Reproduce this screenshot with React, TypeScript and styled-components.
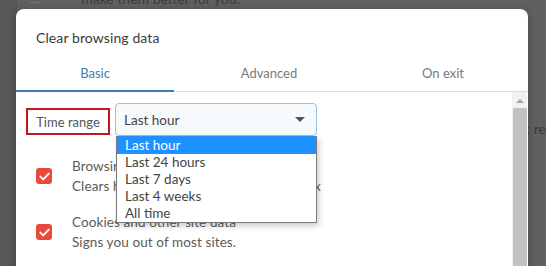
import styled, { createGlobalStyle } from "styled-components";

const GlobalStyle = createGlobalStyle`
  html, body {
    margin: 0;
    padding: 0;
    background: #5f5f5f;
    overflow: hidden;
  }
  * {
    box-sizing: border-box;
  }
`;

const Page = styled.div`
  position: relative;
  width: 546px;
  height: 266px;
  overflow: hidden;
  display: flex;
  background: #606060;
  font-family: Lato, "Noto Sans", sans-serif;
`;

const Sidebar = styled.div`
  width: 23px;
  background: #585858;
  border-right: 1px solid #555;
`;

const BackMain = styled.div`
  flex: 1;
  display: flex;
  flex-direction: column;
  padding: 0 0 0 64px;
  color: #3c3c3c;
  font-size: 14px;
`;

const BackLine = styled.div<{ $top: number; $left?: number }>`
  margin-top: ${(p) => p.$top}px;
  padding-left: ${(p) => p.$left ?? 0}px;
  line-height: 16px;
  white-space: nowrap;
`;

const MenuIcon = styled.div`
  position: absolute;
  left: 30px;
  top: 0;
  width: 9px;
  height: 3px;
  border-bottom: 1px solid #777;
`;

const Dialog = styled.div`
  position: absolute;
  top: 9px;
  left: 16px;
  width: 512px;
  height: 290px;
  background: #fff;
  border-radius: 8px;
  box-shadow: 0 2px 8px rgba(0, 0, 0, 0.25);
  display: flex;
  flex-direction: column;
`;

const Title = styled.h2`
  margin: 0;
  padding: 20px 20px 0;
  height: 46px;
  font-size: 14px;
  font-weight: 400;
  letter-spacing: 0.1px;
  color: #3a3a3a;
`;

const Tabs = styled.div`
  display: grid;
  grid-template-columns: 158px 158px 158px;
  column-gap: 16px;
  height: 37px;
  border-bottom: 1px solid #dcdcdc;
`;

const Tab = styled.div<{ $active?: boolean }>`
  display: flex;
  align-items: center;
  justify-content: center;
  font-size: 13px;
  color: ${(p) => (p.$active ? "#3d7cb8" : "#7a7a7a")};
  border-bottom: 2px solid ${(p) => (p.$active ? "#3d7cb8" : "transparent")};
  margin-bottom: -1px;
`;

const Body = styled.div`
  flex: 1;
  display: flex;
  overflow: hidden;
`;

const Content = styled.div`
  flex: 1;
  padding: 11px 0 0 10px;
  display: flex;
  flex-direction: column;
`;

const RangeRow = styled.div`
  position: relative;
  display: flex;
  align-items: center;
  gap: 5px;
`;

const RangeLabel = styled.div`
  width: 84px;
  height: 27px;
  margin-top: 4px;
  border: 2px solid #c4161c;
  display: flex;
  align-items: center;
  justify-content: center;
  font-size: 13px;
  color: #555;
`;

const Select = styled.div`
  width: 202px;
  height: 33px;
  border: 1px solid #9dbfe0;
  border-radius: 4px;
  background: #f7fafd;
  display: flex;
  align-items: center;
  justify-content: space-between;
  padding: 0 11px 0 8px;
  font-size: 13.5px;
  color: #444;
`;

const Arrow = styled.div`
  width: 0;
  height: 0;
  border-left: 5px solid transparent;
  border-right: 5px solid transparent;
  border-top: 5px solid #555;
`;

const Options = styled.ul`
  position: absolute;
  top: 33px;
  left: 90px;
  width: 201px;
  margin: 0;
  padding: 0;
  list-style: none;
  background: #fff;
  border: 1px solid #7a7a7a;
  border-top: none;
  box-shadow: 2px 3px 6px rgba(0, 0, 0, 0.2);
  z-index: 2;
`;

const Option = styled.li<{ $selected?: boolean }>`
  height: 17px;
  line-height: 17px;
  padding-left: 8px;
  font-size: 13.5px;
  color: ${(p) => (p.$selected ? "#fff" : "#444")};
  background: ${(p) => (p.$selected ? "#1e90ff" : "transparent")};
  &:first-child {
    height: 18px;
    line-height: 18px;
  }
`;

const Item = styled.div<{ $top: number }>`
  display: flex;
  align-items: center;
  gap: 20px;
  margin-top: ${(p) => p.$top}px;
  padding-left: 10px;
`;

const Check = styled.div`
  width: 16px;
  height: 16px;
  border-radius: 3px;
  background: #e84a3c;
  display: flex;
  align-items: center;
  justify-content: center;
`;

const ItemText = styled.div`
  display: flex;
  flex-direction: column;
  font-size: 13.5px;
  line-height: 20px;
  letter-spacing: 0.1px;
  color: #5a5a5a;
  white-space: nowrap;
`;

const ScrollTrack = styled.div`
  width: 15px;
  margin-right: 1px;
  background: #f1f1f1;
  display: flex;
  flex-direction: column;
  align-items: center;
`;

const ScrollUp = styled.div`
  margin-top: 7px;
  width: 0;
  height: 0;
  border-left: 4px solid transparent;
  border-right: 4px solid transparent;
  border-bottom: 4px solid #a3a3a3;
`;

const ScrollThumb = styled.div`
  margin-top: 5px;
  width: 14px;
  flex: 1;
  background: #c1c1c1;
`;

const options = ["Last hour", "Last 24 hours", "Last 7 days", "Last 4 weeks", "All time"];

function CheckMark() {
  return (
    <svg width="11" height="9" viewBox="0 0 11 9">
      <path d="M1.3 4.6 L4.2 7.4 L9.8 1.6" fill="none" stroke="#fff" strokeWidth="1.9" strokeLinecap="round" strokeLinejoin="round" />
    </svg>
  );
}

export default function App() {
  return (
    <>
      <GlobalStyle />
      <Page>
        <Sidebar />
        <MenuIcon />
        <BackMain>
          <BackLine $top={-9}>make them better for you.</BackLine>
          <BackLine $top={114} $left={439}>ic re</BackLine>
        </BackMain>
        <Dialog>
          <Title>Clear browsing data</Title>
          <Tabs>
            <Tab $active>Basic</Tab>
            <Tab>Advanced</Tab>
            <Tab>On exit</Tab>
          </Tabs>
          <Body>
            <Content>
              <RangeRow>
                <RangeLabel>Time range</RangeLabel>
                <Select>
                  <span>Last hour</span>
                  <Arrow />
                </Select>
                <Options>
                  {options.map((o, i) => (
                    <Option key={o} $selected={i === 0}>
                      {o}
                    </Option>
                  ))}
                </Options>
              </RangeRow>
              <Item $top={20}>
                <Check>
                  <CheckMark />
                </Check>
                <ItemText>
                  <span>Browsing history</span>
                  <span>Clears history, including in the search box</span>
                </ItemText>
              </Item>
              <Item $top={16}>
                <Check>
                  <CheckMark />
                </Check>
                <ItemText>
                  <span>Cookies and other site data</span>
                  <span>Signs you out of most sites.</span>
                </ItemText>
              </Item>
            </Content>
            <ScrollTrack>
              <ScrollUp />
              <ScrollThumb />
            </ScrollTrack>
          </Body>
        </Dialog>
      </Page>
    </>
  );
}
